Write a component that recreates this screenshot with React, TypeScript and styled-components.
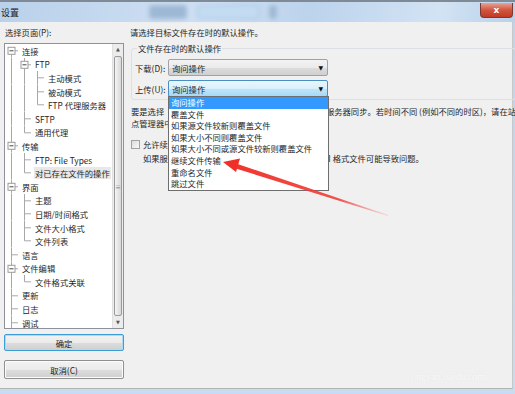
import styled, { createGlobalStyle } from "styled-components";

const Global = createGlobalStyle`
  html, body { margin: 0; padding: 0; background: #f0f0f0; }
  body {
    font-family: "Noto Sans CJK SC", "Liberation Sans", sans-serif;
    font-size: 8.3px;
    color: #262626;
  }
`;

const Window = styled.div`
  width: 515px;
  height: 394px;
  display: flex;
  flex-direction: column;
  position: relative;
  overflow: hidden;
  background: linear-gradient(180deg, #bcd4ec, #c8dcf1);
`;

const TitleBar = styled.div`
  height: 22px;
  display: flex;
  align-items: center;
  border-top: 2px solid #7f8a96;
  box-sizing: border-box;
  background: linear-gradient(100deg, #b9d1ea 0%, #cfe0f3 40%, #bcd3ec 60%, #d2e3f4 85%, #b9d1ea 100%);
`;

const TitleText = styled.span`
  font-size: 9px;
  color: #1a1a1a;
  padding-left: 1px;
  width: 148px;
`;

const Blur = styled.div<{ $w: number; $dark?: boolean }>`
  width: ${(p) => p.$w}px;
  height: 12px;
  margin-right: 10px;
  border-radius: 3px;
  filter: blur(2px);
  background: ${(p) => (p.$dark ? "#9db8d4" : "#c4dcf2")};
  border: 1px solid ${(p) => (p.$dark ? "#a8c0da" : "#9fbfdd")};
`;

const CloseBtn = styled.div`
  margin-left: auto;
  margin-right: 2px;
  width: 31px;
  height: 14px;
  margin-top: -4px;
  border-radius: 0 0 4px 4px;
  border: 1px solid #7a3a34;
  border-top: none;
  background: linear-gradient(180deg, #e8a493 0%, #d2553f 50%, #c13a22 100%);
  color: #fff;
  font-family: "DejaVu Sans", sans-serif;
  font-size: 9px;
  font-weight: bold;
  display: flex;
  align-items: center;
  justify-content: center;
`;

const Body = styled.div`
  flex: 1;
  display: flex;
  gap: 6px;
  padding: 3px 4px 0 4px;
  margin-right: 2px;
  margin-bottom: 5px;
  background: #f0f0f0;
  border-bottom: 1px solid #b4b4b4;
  border-right: 1px solid #c8c8c8;
`;

const LeftCol = styled.div`
  width: 120px;
  display: flex;
  flex-direction: column;
`;

const Caption = styled.div`
  height: 14px;
  line-height: 14px;
  padding-left: 1px;
`;

const TreeBox = styled.div`
  margin-top: 4px;
  height: 286px;
  box-sizing: border-box;
  border: 1px solid #8e939b;
  background: #fff;
  display: flex;
`;

const TreeList = styled.div`
  flex: 1;
  overflow: hidden;
`;

const TreeRow = styled.div`
  height: 13.6px;
  display: flex;
  align-items: center;
  white-space: nowrap;
`;

const Cell = styled.svg`
  width: 13px;
  height: 13.6px;
  flex: none;
`;

const NodeText = styled.span<{ $selected?: boolean }>`
  margin-left: 3px;
  padding: 0 1px;
  line-height: 12px;
  background: ${(p) => (p.$selected ? "#e8e8e8" : "transparent")};
`;

const ScrollBar = styled.div`
  width: 10px;
  background: #ececec;
  border-left: 1px solid #e0e0e0;
  display: flex;
  flex-direction: column;
  align-items: center;
`;

const ScrollArrow = styled.div`
  height: 11px;
  font-size: 5px;
  color: #555;
  line-height: 11px;
  font-family: "DejaVu Sans", sans-serif;
`;

const Thumb = styled.div`
  width: 8px;
  flex: 1;
  box-sizing: border-box;
  border: 1px solid #9a9a9a;
  border-radius: 2px;
  background: linear-gradient(90deg, #f4f4f4, #d8d8d8);
  display: flex;
  align-items: center;
  justify-content: center;
  font-size: 6px;
  color: #777;
  margin: 1px 0;
`;

const Button = styled.button<{ $focus?: boolean }>`
  height: ${(p) => (p.$focus ? 17 : 19)}px;
  margin-top: ${(p) => (p.$focus ? 5 : 9)}px;
  width: 120px;
  border-radius: 2px;
  border: 1px solid ${(p) => (p.$focus ? "#3c9cd6" : "#8f8f8f")};
  box-shadow: ${(p) => (p.$focus ? "inset 0 0 0 1px #a9dcf6" : "inset 0 0 0 1px #fcfcfc")};
  background: linear-gradient(180deg, #f2f2f2 0%, #ebebeb 50%, #dddddd 51%, #cfcfcf 100%);
  font-family: inherit;
  font-size: 8.3px;
  color: #222;
  padding: 0;
`;

const RightCol = styled.div`
  flex: 1;
  display: flex;
  flex-direction: column;
  padding-right: 1px;
`;

const Intro = styled.div`
  height: 14px;
  line-height: 14px;
`;

const Group = styled.fieldset`
  margin: 4px 0 0 1px;
  padding: 5px 0 0 3px;
  height: 57px;
  box-sizing: border-box;
  border: 1px solid #dcdfe3;
  border-radius: 3px;
  display: flex;
  flex-direction: column;
  gap: 4px;
`;

const Legend = styled.legend`
  padding: 0 1px;
  margin-left: 2px;
  line-height: 11px;
`;

const FieldRow = styled.div`
  display: flex;
  align-items: center;
  height: 17px;
`;

const FieldLabel = styled.span`
  width: 33px;
`;

const Combo = styled.div<{ $active?: boolean }>`
  position: relative;
  width: 160px;
  height: 17px;
  box-sizing: border-box;
  border-radius: 2px;
  border: 1px solid ${(p) => (p.$active ? "#4a8fc3" : "#a2a2a2")};
  background: ${(p) =>
    p.$active
      ? "linear-gradient(180deg, #eaf6fd 0%, #d9f0fc 50%, #bee6fd 51%, #a7d9f5 100%)"
      : "linear-gradient(180deg, #f3f3f3 0%, #ebebeb 50%, #dddddd 51%, #cfcfcf 100%)"};
  display: flex;
  align-items: center;
  padding-left: 3px;
`;

const ComboArrow = styled.span`
  margin-left: auto;
  margin-right: 4px;
  font-size: 6px;
  color: #111;
  font-family: "DejaVu Sans", sans-serif;
`;

const DropList = styled.div`
  position: absolute;
  top: 15px;
  left: -1px;
  width: 159px;
  background: #fff;
  border: 1px solid #6e6e6e;
  z-index: 2;
`;

const DropItem = styled.div<{ $hot?: boolean }>`
  height: 11.6px;
  line-height: 11.6px;
  padding-left: 2px;
  white-space: nowrap;
  background: ${(p) => (p.$hot ? "#3399ff" : "transparent")};
  color: ${(p) => (p.$hot ? "#fff" : "#262626")};
`;

const Para = styled.div`
  margin-top: 5px;
  line-height: 12px;
  white-space: nowrap;
  padding-left: 1px;
`;

const CheckRow = styled.div`
  margin-top: 9px;
  display: flex;
  align-items: center;
  gap: 3px;
  white-space: nowrap;
  padding-left: 1px;
`;

const Check = styled.span`
  width: 9px;
  height: 9px;
  box-sizing: border-box;
  border: 1px solid #a3a3a3;
  background: linear-gradient(135deg, #dcdcdc, #fafafa);
`;

const Note = styled.div`
  margin-top: 2px;
  padding-left: 13px;
  line-height: 12px;
  white-space: nowrap;
`;

const Watermark = styled.div`
  position: absolute;
  right: 30px;
  bottom: 12px;
  font-family: "Liberation Serif", serif;
  font-size: 10px;
  color: #f8f8f8;
  text-shadow: 0 0 2px #e6e6e6;
`;

const Overlay = styled.svg`
  position: absolute;
  left: 0;
  top: 0;
  pointer-events: none;
  z-index: 5;
`;

type Node = { depth: number; text: string; toggle?: boolean; selected?: boolean };

const nodes: Node[] = [
  { depth: 0, text: "连接", toggle: true },
  { depth: 1, text: "FTP", toggle: true },
  { depth: 2, text: "主动模式" },
  { depth: 2, text: "被动模式" },
  { depth: 2, text: "FTP 代理服务器" },
  { depth: 1, text: "SFTP" },
  { depth: 1, text: "通用代理" },
  { depth: 0, text: "传输", toggle: true },
  { depth: 1, text: "FTP: File Types" },
  { depth: 1, text: "对已存在文件的操作", selected: true },
  { depth: 0, text: "界面", toggle: true },
  { depth: 1, text: "主题" },
  { depth: 1, text: "日期/时间格式" },
  { depth: 1, text: "文件大小格式" },
  { depth: 1, text: "文件列表" },
  { depth: 0, text: "语言" },
  { depth: 0, text: "文件编辑", toggle: true },
  { depth: 1, text: "文件格式关联" },
  { depth: 0, text: "更新" },
  { depth: 0, text: "日志" },
  { depth: 0, text: "调试" },
];

// does the node at index i have a later sibling at the same depth
function hasNext(i: number) {
  const d = nodes[i].depth;
  if (d === 0) return true;
  for (let j = i + 1; j < nodes.length; j++) {
    if (nodes[j].depth < d) return false;
    if (nodes[j].depth === d) return true;
  }
  return false;
}

const LINE = "#a8a8a8";

function Guide({ kind, toggle, first }: { kind: "pass" | "tee" | "end" | "none"; toggle?: boolean; first?: boolean }) {
  const c = 6.5;
  const m = 6.8;
  return (
    <Cell viewBox="0 0 13 13.6">
      {kind === "pass" && <line x1={c} y1={0} x2={c} y2={13.6} stroke={LINE} strokeWidth={1} />}
      {(kind === "tee" || kind === "end") && (
        <>
          <line x1={c} y1={first ? m : 0} x2={c} y2={kind === "tee" ? 13.6 : m} stroke={LINE} strokeWidth={1} />
          <line x1={c} y1={m} x2={13} y2={m} stroke={LINE} strokeWidth={1} />
        </>
      )}
      {toggle && (
        <>
          <rect x={3} y={3.3} width={7} height={7} fill="#fff" stroke="#9a9a9a" strokeWidth={1} />
          <line x1={4.5} y1={m} x2={8.5} y2={m} stroke="#444" strokeWidth={1} />
        </>
      )}
    </Cell>
  );
}

function Tree() {
  const open: boolean[] = [];
  return (
    <TreeList>
      {nodes.map((n, i) => {
        const next = hasNext(i);
        open[n.depth] = next;
        const cells = [];
        for (let d = 0; d < n.depth; d++) {
          cells.push(<Guide key={d} kind={open[d] ? "pass" : "none"} />);
        }
        cells.push(<Guide key="own" kind={next ? "tee" : "end"} toggle={n.toggle} first={i === 0} />);
        return (
          <TreeRow key={i}>
            {cells}
            <NodeText $selected={n.selected}>{n.text}</NodeText>
          </TreeRow>
        );
      })}
    </TreeList>
  );
}

const options = [
  "询问操作",
  "覆盖文件",
  "如果源文件较新则覆盖文件",
  "如果大小不同则覆盖文件",
  "如果大小不同或源文件较新则覆盖文件",
  "继续文件传输",
  "重命名文件",
  "跳过文件",
];

export default function App() {
  return (
    <>
      <Global />
      <Window>
        <TitleBar>
          <TitleText>设置</TitleText>
          <Blur $w={36} $dark />
          <Blur $w={60} />
          <Blur $w={6} $dark />
          <CloseBtn>x</CloseBtn>
        </TitleBar>
        <Body>
          <LeftCol>
            <Caption>选择页面(P):</Caption>
            <TreeBox>
              <Tree />
              <ScrollBar>
                <ScrollArrow>▲</ScrollArrow>
                <Thumb>≡</Thumb>
                <ScrollArrow>▼</ScrollArrow>
              </ScrollBar>
            </TreeBox>
            <Button $focus>确定</Button>
            <Button>取消(C)</Button>
          </LeftCol>
          <RightCol>
            <Intro>请选择目标文件存在时的默认操作。</Intro>
            <Group>
              <Legend>文件存在时的默认操作</Legend>
              <FieldRow>
                <FieldLabel>下载(D):</FieldLabel>
                <Combo>
                  询问操作
                  <ComboArrow>▼</ComboArrow>
                </Combo>
              </FieldRow>
              <FieldRow>
                <FieldLabel>上传(U):</FieldLabel>
                <Combo $active>
                  询问操作
                  <ComboArrow>▼</ComboArrow>
                  <DropList>
                    {options.map((o, i) => (
                      <DropItem key={o} $hot={i === 0}>
                        {o}
                      </DropItem>
                    ))}
                  </DropList>
                </Combo>
              </FieldRow>
            </Group>
            <Para>
              <div>要是选择“如果源文件较新则覆盖文件”，本地时间与服务器同步。若时间不同 (例如不同的时区)，请在站</div>
              <div>点管理器中设置服务器的时区偏移。</div>
            </Para>
            <CheckRow>
              <Check />
              <span>允许续传 ASCII 文件</span>
            </CheckRow>
            <Note>如果服务器或客户端不是 Windows 系统,续传 ASCII 格式文件可能导致问题。</Note>
          </RightCol>
        </Body>
        <Watermark>jingyan.baidu.com</Watermark>
        <Overlay width={515} height={394} viewBox="0 0 515 394">
          <defs>
            <linearGradient id="fade" x1="223" y1="162" x2="388" y2="216" gradientUnits="userSpaceOnUse">
              <stop offset="0" stopColor="#f0322a" />
              <stop offset="0.7" stopColor="#f0403a" stopOpacity="0.9" />
              <stop offset="1" stopColor="#f07070" stopOpacity="0.2" />
            </linearGradient>
          </defs>
          <polygon points="236,163.5 388,215 388,216 234,168" fill="url(#fade)" />
          <polygon points="223,162 240,158.5 236,172" fill="#ef2f28" />
        </Overlay>
      </Window>
    </>
  );
}
